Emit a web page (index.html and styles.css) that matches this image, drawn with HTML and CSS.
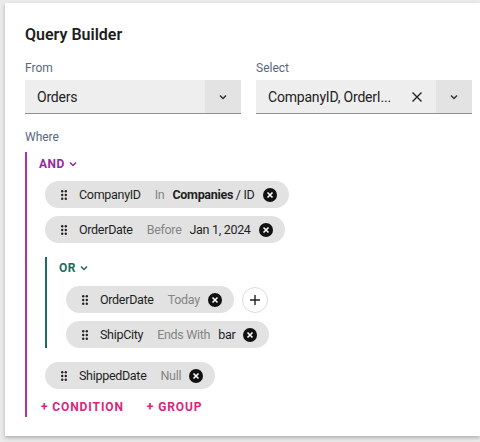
FILE: index.html
```html
<!DOCTYPE html>
<html>
<head>
<meta charset="utf-8">
<link rel="stylesheet" href="styles.css">
</head>
<body>
<div class="card">
  <h1 class="title">Query Builder</h1>
  <div class="fields">
    <div class="field">
      <div class="label">From</div>
      <div class="select">
        <span class="select-value">Orders</span>
        <span class="toggle"><svg width="10" height="6" viewBox="0 0 10 6"><path d="M2 1.5 L5 4.5 L8 1.5" fill="none" stroke="#333" stroke-width="1.5"/></svg></span>
      </div>
    </div>
    <div class="field">
      <div class="label">Select</div>
      <div class="select">
        <span class="select-value">CompanyID, OrderI...</span>
        <span class="clear"><svg width="12" height="12" viewBox="0 0 12 12"><path d="M1.5 1.5 L10.5 10.5 M10.5 1.5 L1.5 10.5" stroke="#222" stroke-width="1.4"/></svg></span>
        <span class="toggle"><svg width="10" height="6" viewBox="0 0 10 6"><path d="M2 1.5 L5 4.5 L8 1.5" fill="none" stroke="#333" stroke-width="1.5"/></svg></span>
      </div>
    </div>
  </div>
  <div class="label where">Where</div>
  <div class="group and">
    <div class="group-head">AND <svg width="10" height="6" viewBox="0 0 10 6"><path d="M2 1.5 L5 4.5 L8 1.5" fill="none" stroke="currentColor" stroke-width="1.5"/></svg></div>
    <div class="items">
      <div class="chip">
        <svg class="handle" width="6" height="10" viewBox="0 0 6 10"><circle cx="1.2" cy="1.2" r="1.2"/><circle cx="4.8" cy="1.2" r="1.2"/><circle cx="1.2" cy="5" r="1.2"/><circle cx="4.8" cy="5" r="1.2"/><circle cx="1.2" cy="8.8" r="1.2"/><circle cx="4.8" cy="8.8" r="1.2"/></svg>
        <span class="fld">CompanyID</span><span class="op">In</span><span class="val"><b>Companies</b> / ID</span>
        <svg class="close" width="14" height="14" viewBox="0 0 14 14"><circle cx="7" cy="7" r="7" fill="#111"/><path d="M4.5 4.5 L9.5 9.5 M9.5 4.5 L4.5 9.5" stroke="#fff" stroke-width="1.6"/></svg>
      </div>
      <div class="chip">
        <svg class="handle" width="6" height="10" viewBox="0 0 6 10"><circle cx="1.2" cy="1.2" r="1.2"/><circle cx="4.8" cy="1.2" r="1.2"/><circle cx="1.2" cy="5" r="1.2"/><circle cx="4.8" cy="5" r="1.2"/><circle cx="1.2" cy="8.8" r="1.2"/><circle cx="4.8" cy="8.8" r="1.2"/></svg>
        <span class="fld">OrderDate</span><span class="op">Before</span><span class="val">Jan 1, 2024</span>
        <svg class="close" width="14" height="14" viewBox="0 0 14 14"><circle cx="7" cy="7" r="7" fill="#111"/><path d="M4.5 4.5 L9.5 9.5 M9.5 4.5 L4.5 9.5" stroke="#fff" stroke-width="1.6"/></svg>
      </div>
      <div class="group or">
        <div class="group-head">OR <svg width="10" height="6" viewBox="0 0 10 6"><path d="M2 1.5 L5 4.5 L8 1.5" fill="none" stroke="currentColor" stroke-width="1.5"/></svg></div>
        <div class="items">
          <div class="row">
            <div class="chip">
              <svg class="handle" width="6" height="10" viewBox="0 0 6 10"><circle cx="1.2" cy="1.2" r="1.2"/><circle cx="4.8" cy="1.2" r="1.2"/><circle cx="1.2" cy="5" r="1.2"/><circle cx="4.8" cy="5" r="1.2"/><circle cx="1.2" cy="8.8" r="1.2"/><circle cx="4.8" cy="8.8" r="1.2"/></svg>
              <span class="fld">OrderDate</span><span class="op last">Today</span>
              <svg class="close" width="14" height="14" viewBox="0 0 14 14"><circle cx="7" cy="7" r="7" fill="#111"/><path d="M4.5 4.5 L9.5 9.5 M9.5 4.5 L4.5 9.5" stroke="#fff" stroke-width="1.6"/></svg>
            </div>
            <span class="add"><svg width="12" height="12" viewBox="0 0 12 12"><path d="M6 1 V11 M1 6 H11" stroke="#222" stroke-width="1.4"/></svg></span>
          </div>
          <div class="chip">
            <svg class="handle" width="6" height="10" viewBox="0 0 6 10"><circle cx="1.2" cy="1.2" r="1.2"/><circle cx="4.8" cy="1.2" r="1.2"/><circle cx="1.2" cy="5" r="1.2"/><circle cx="4.8" cy="5" r="1.2"/><circle cx="1.2" cy="8.8" r="1.2"/><circle cx="4.8" cy="8.8" r="1.2"/></svg>
            <span class="fld">ShipCity</span><span class="op">Ends With</span><span class="val">bar</span>
            <svg class="close" width="14" height="14" viewBox="0 0 14 14"><circle cx="7" cy="7" r="7" fill="#111"/><path d="M4.5 4.5 L9.5 9.5 M9.5 4.5 L4.5 9.5" stroke="#fff" stroke-width="1.6"/></svg>
          </div>
        </div>
      </div>
      <div class="chip">
        <svg class="handle" width="6" height="10" viewBox="0 0 6 10"><circle cx="1.2" cy="1.2" r="1.2"/><circle cx="4.8" cy="1.2" r="1.2"/><circle cx="1.2" cy="5" r="1.2"/><circle cx="4.8" cy="5" r="1.2"/><circle cx="1.2" cy="8.8" r="1.2"/><circle cx="4.8" cy="8.8" r="1.2"/></svg>
        <span class="fld">ShippedDate</span><span class="op last">Null</span>
        <svg class="close" width="14" height="14" viewBox="0 0 14 14"><circle cx="7" cy="7" r="7" fill="#111"/><path d="M4.5 4.5 L9.5 9.5 M9.5 4.5 L4.5 9.5" stroke="#fff" stroke-width="1.6"/></svg>
      </div>
    </div>
    <div class="actions">
      <span class="action">+ CONDITION</span>
      <span class="action">+ GROUP</span>
    </div>
  </div>
</div>
</body>
</html>
```

FILE: styles.css
```css
html, body {
  margin: 0;
  padding: 0;
}
body {
  background: #ebebeb;
  font-family: Roboto, "Noto Sans", sans-serif;
  color: #1f1f1f;
  width: 480px;
  height: 442px;
  overflow: hidden;
}
.card {
  margin: 3px 0 0 5px;
  width: 475px;
  box-sizing: border-box;
  background: #fff;
  padding: 20px 20px 19px 20px;
  box-shadow: 0 2px 4px rgba(0,0,0,0.25);
}
.title {
  margin: 0 0 13px 0;
  font-size: 16px;
  line-height: 24px;
  font-weight: 600;
  color: #1e1e1e;
}
.fields {
  display: grid;
  grid-template-columns: 216px 216px;
  column-gap: 15px;
}
.label {
  font-size: 12px;
  line-height: 16px;
  color: #55687c;
  margin-bottom: 4px;
}
.select {
  display: flex;
  align-items: stretch;
  height: 34px;
  background: #efeeef;
  border-bottom: 1px solid #8f8f8f;
  box-sizing: border-box;
}
.select-value {
  flex: 1;
  display: flex;
  align-items: center;
  padding-left: 12px;
  font-size: 14px;
  letter-spacing: -0.2px;
  color: #222;
  white-space: nowrap;
}
.clear {
  width: 18px;
  display: flex;
  align-items: center;
  justify-content: center;
  margin-right: 10px;
}
.toggle {
  width: 36px;
  background: #e4e3e4;
  display: flex;
  align-items: center;
  justify-content: center;
}
.where {
  margin: 15px 0 7px 0;
}
.group {
  border-left: 2px solid #a431c0;
  padding-left: 12px;
}
.group-head {
  font-size: 12px;
  font-weight: 700;
  letter-spacing: 0.5px;
  line-height: 24px;
  height: 24px;
  display: flex;
  align-items: center;
  gap: 3px;
  color: #95279f;
  margin-bottom: 5px;
}
.items {
  margin-left: 6px;
  display: flex;
  flex-direction: column;
  align-items: flex-start;
  gap: 8px;
}
.group.or {
  border-left-color: #1d6e5c;
  margin: 6px 0;
}
.group.or .group-head {
  color: #1d6e5c;
  height: 22px;
  margin-bottom: 7px;
}
.group.or .items {
  margin-left: 7px;
}
.row {
  display: flex;
  align-items: center;
  gap: 8px;
}
.chip {
  display: flex;
  align-items: center;
  height: 27px;
  border-radius: 14px;
  background: #e2e2e2;
  padding: 0 12px 0 16px;
  font-size: 12.5px;
  letter-spacing: -0.3px;
  color: #1f1f1f;
  white-space: nowrap;
}
.handle {
  fill: #222;
  margin-right: 12px;
}
.fld {
  margin-right: 14px;
}
.op {
  color: #858585;
  margin-right: 8px;
}
.val {
  margin-right: 8px;
}
.val b {
  font-weight: 700;
}
.close {
  flex: none;
}
.add {
  width: 26px;
  height: 26px;
  border-radius: 50%;
  border: 1px solid #dcdcdc;
  box-sizing: border-box;
  background: #fff;
  display: flex;
  align-items: center;
  justify-content: center;
}
.actions {
  margin: 8px 0 0 2px;
  height: 20px;
  display: flex;
  align-items: center;
  gap: 23px;
}
.action {
  font-size: 12px;
  font-weight: 700;
  letter-spacing: 0.9px;
  color: #d9267a;
}
```
